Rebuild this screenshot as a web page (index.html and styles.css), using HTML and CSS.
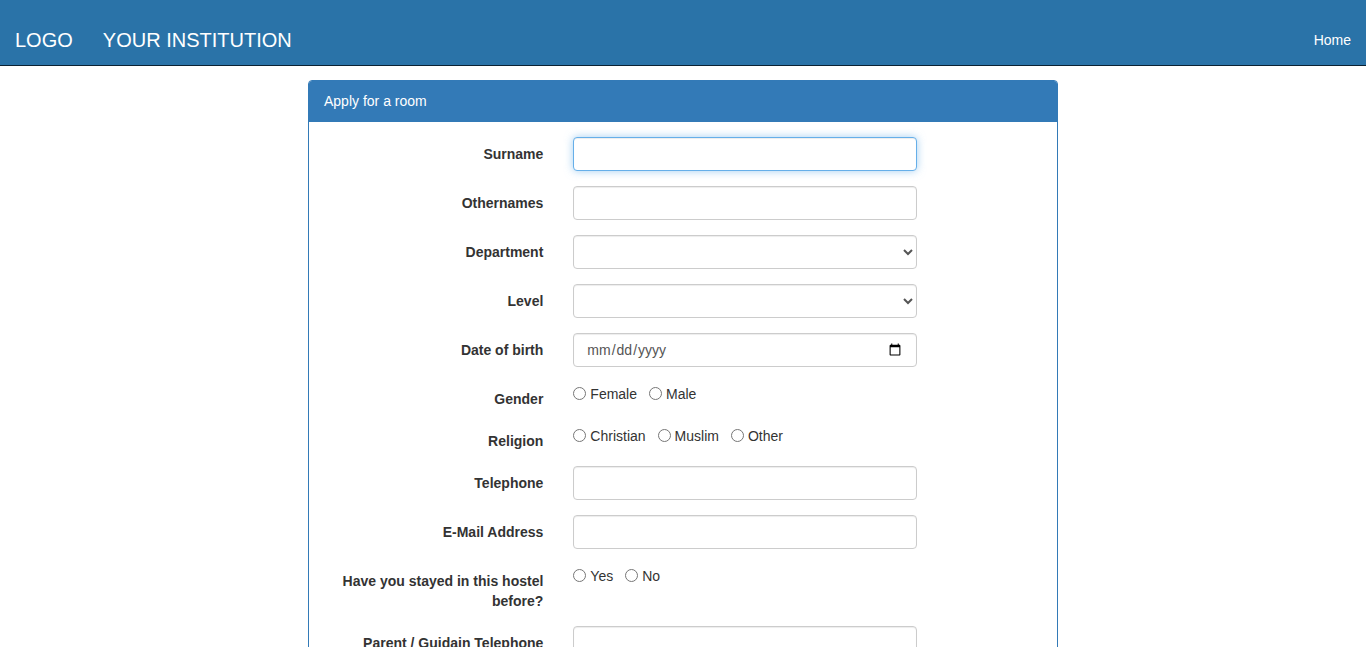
FILE: index.html
```html
<!DOCTYPE html>
<html lang="en">
<head>
<meta charset="utf-8">
<title>Apply for a room</title>
<link rel="stylesheet" href="styles.css">
</head>
<body>
<nav class="navbar">
  <div class="brand-group">
    <a class="brand" href="#">LOGO</a>
    <a class="brand" href="#">YOUR INSTITUTION</a>
  </div>
  <a class="nav-link" href="#">Home</a>
</nav>

<main class="container">
  <section class="panel">
    <div class="panel-heading">Apply for a room</div>
    <form class="panel-body">
      <div class="row">
        <label class="row-label" for="surname">Surname</label>
        <div class="row-field"><input id="surname" class="control focused" type="text"></div>
      </div>
      <div class="row">
        <label class="row-label" for="othernames">Othernames</label>
        <div class="row-field"><input id="othernames" class="control" type="text"></div>
      </div>
      <div class="row">
        <label class="row-label" for="department">Department</label>
        <div class="row-field"><select id="department" class="control"><option></option></select></div>
      </div>
      <div class="row">
        <label class="row-label" for="level">Level</label>
        <div class="row-field"><select id="level" class="control"><option></option></select></div>
      </div>
      <div class="row">
        <label class="row-label" for="dob">Date of birth</label>
        <div class="row-field"><input id="dob" class="control" type="date"></div>
      </div>
      <div class="row">
        <span class="row-label">Gender</span>
        <div class="row-field radios">
          <label class="radio"><input type="radio" name="gender">Female</label>
          <label class="radio"><input type="radio" name="gender">Male</label>
        </div>
      </div>
      <div class="row">
        <span class="row-label">Religion</span>
        <div class="row-field radios">
          <label class="radio"><input type="radio" name="religion">Christian</label>
          <label class="radio"><input type="radio" name="religion">Muslim</label>
          <label class="radio"><input type="radio" name="religion">Other</label>
        </div>
      </div>
      <div class="row">
        <label class="row-label" for="tel">Telephone</label>
        <div class="row-field"><input id="tel" class="control" type="text"></div>
      </div>
      <div class="row">
        <label class="row-label" for="email">E-Mail Address</label>
        <div class="row-field"><input id="email" class="control" type="email"></div>
      </div>
      <div class="row">
        <span class="row-label">Have you stayed in this hostel before?</span>
        <div class="row-field radios">
          <label class="radio"><input type="radio" name="stayed">Yes</label>
          <label class="radio"><input type="radio" name="stayed">No</label>
        </div>
      </div>
      <div class="row">
        <label class="row-label" for="ptel">Parent / Guidain Telephone</label>
        <div class="row-field"><input id="ptel" class="control" type="text"></div>
      </div>
      <div class="row">
        <label class="row-label" for="address">Home Address</label>
        <div class="row-field"><input id="address" class="control" type="text"></div>
      </div>
      <div class="row">
        <span class="row-label"></span>
        <div class="row-field"><button class="btn" type="submit">Apply</button></div>
      </div>
    </form>
  </section>
</main>
</body>
</html>
```

FILE: styles.css
```css
* { box-sizing: border-box; }

html, body {
  margin: 0;
  padding: 0;
}

body {
  font-family: "Liberation Sans", Arial, Helvetica, sans-serif;
  font-size: 14px;
  line-height: 20px;
  color: #333;
  background: #fff;
}

.navbar {
  display: flex;
  justify-content: space-between;
  align-items: center;
  height: 66px;
  padding-top: 15px;
  background: #2a73a8;
  border-bottom: 1px solid #0b2233;
}

.brand-group {
  display: flex;
}

.brand {
  padding: 0 15px;
  font-size: 20px;
  line-height: 20px;
  color: #fff;
  text-decoration: none;
}

.nav-link {
  padding: 0 15px;
  font-size: 14px;
  color: #fff;
  text-decoration: none;
}

.container {
  width: 750px;
  margin: 14px auto 0;
}

.panel {
  border: 1px solid #337ab7;
  border-radius: 4px;
  background: #fff;
}

.panel-heading {
  padding: 10px 15px;
  background: #337ab7;
  color: #fff;
  border-bottom: 1px solid #337ab7;
  border-radius: 3px 3px 0 0;
}

.panel-body {
  display: flex;
  flex-direction: column;
  gap: 15px;
  padding: 15px 0;
}

.row {
  display: grid;
  grid-template-columns: 249.33px 374px;
}

.row-label {
  padding: 7px 15px 0;
  text-align: right;
  font-weight: bold;
}

.row-field {
  padding: 0 15px;
}

.control {
  display: block;
  width: 100%;
  height: 34px;
  padding: 6px 12px;
  font-family: inherit;
  font-size: 14px;
  line-height: 20px;
  color: #555;
  background: #fff;
  border: 1px solid #ccc;
  border-radius: 4px;
  box-shadow: inset 0 1px 1px rgba(0, 0, 0, 0.075);
  outline: none;
}

.control.focused {
  border-color: #66afe9;
  box-shadow: inset 0 1px 1px rgba(0, 0, 0, 0.075), 0 0 8px rgba(102, 175, 233, 0.6);
}

select.control {
  padding: 6px 8px;
}

.radios {
  display: flex;
  align-items: flex-start;
  gap: 12px;
  padding-top: 2px;
  height: 22px;
}

.radio {
  display: inline-flex;
  align-items: center;
  height: 20px;
  font-weight: normal;
  color: #333;
  cursor: pointer;
}

.radio input {
  width: 13px;
  height: 13px;
  margin: 0 4px 0 0;
  position: relative;
  top: -1px;
}

.btn {
  padding: 6px 12px;
  font-family: inherit;
  font-size: 14px;
  line-height: 20px;
  color: #fff;
  background: #337ab7;
  border: 1px solid #2e6da4;
  border-radius: 4px;
}
```
